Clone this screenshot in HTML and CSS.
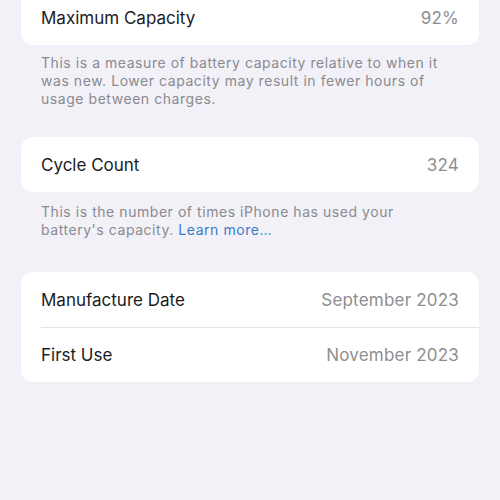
FILE: index.html
```html
<!DOCTYPE html>
<html>
<head>
<meta charset="utf-8">
<link rel="stylesheet" href="styles.css">
</head>
<body>
<div class="page">
  <section class="group first">
    <div class="card">
      <div class="row"><span class="label">Maximum Capacity</span><span class="value">92%</span></div>
    </div>
    <p class="footer">This is a measure of battery capacity relative to when it was new. Lower capacity may result in fewer hours of usage between charges.</p>
  </section>
  <section class="group second">
    <div class="card">
      <div class="row"><span class="label">Cycle Count</span><span class="value">324</span></div>
    </div>
    <p class="footer">This is the number of times iPhone has used your battery's capacity. <span class="link">Learn more…</span></p>
  </section>
  <section class="group">
    <div class="card">
      <div class="row"><span class="label">Manufacture Date</span><span class="value">September 2023</span></div>
      <div class="row"><span class="label">First Use</span><span class="value">November 2023</span></div>
    </div>
  </section>
</div>
</body>
</html>
```

FILE: styles.css
```css
html, body {
  margin: 0;
  padding: 0;
  background: #f2f1f8;
  height: 100%;
  overflow: hidden;
}
.page {
  padding: 0 21px;
  font-family: Inter, "Liberation Sans", Arial, sans-serif;
}
.group {
  margin-bottom: 35px;
}
.group.first {
  margin-top: -10px;
  margin-bottom: 29px;
}
.group.second {
  margin-bottom: 33px;
}
.group.second .footer {
  padding-top: 11px;
}
.card {
  background: #ffffff;
  border-radius: 12px;
  overflow: hidden;
}
.row {
  height: 55px;
  display: flex;
  align-items: center;
  justify-content: space-between;
  padding: 0 20px;
  position: relative;
}
.row + .row::before {
  content: "";
  position: absolute;
  top: 0;
  left: 20px;
  right: 0;
  height: 1px;
  background: #e4e3e8;
}
.label {
  font-size: 17px;
  color: #1c1c1e;
}
.value {
  font-size: 17px;
  color: #8e8e93;
  letter-spacing: 0.2px;
}
.footer {
  margin: 0;
  padding: 9px 40px 0 20px;
  font-size: 14px;
  line-height: 18px;
  letter-spacing: 0.55px;
  color: #8a8a8f;
}
.link {
  color: #3a7bc8;
}
```
